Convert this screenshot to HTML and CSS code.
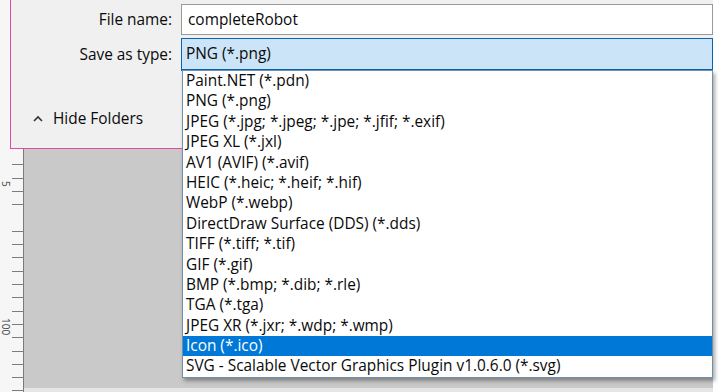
FILE: index.html
```html
<!DOCTYPE html>
<html lang="en">

<head>
    <meta charset="UTF-8">
    <title>Save As</title>
    <link rel="stylesheet" href="styles.css">
</head>

<body>
    <div class="screen">
        <!-- left ruler of the editor -->
        <div class="ruler">
            <span class="ruler-num num-5">5</span>
            <span class="ruler-num num-100">100</span>
        </div>
        <div class="canvas"></div>
        <div class="edge"></div>

        <!-- save dialog -->
        <div class="dialog">
            <div class="form-grid">
                <label class="field-label" for="fileName">File name:</label>
                <div class="text-box" id="fileName">completeRobot</div>

                <label class="field-label" for="fileType">Save as type:</label>
                <div class="combo" id="fileType">PNG (*.png)</div>
            </div>

            <div class="folders-toggle">
                <svg class="chevron" width="10" height="7" viewBox="0 0 10 7">
                    <polyline points="1,6 5,2 9,6" fill="none" stroke="#333" stroke-width="1.6" />
                </svg>
                <span>Hide Folders</span>
            </div>
        </div>

        <!-- opened type list -->
        <ul class="type-list">
            <li>Paint.NET (*.pdn)</li>
            <li>PNG (*.png)</li>
            <li>JPEG (*.jpg; *.jpeg; *.jpe; *.jfif; *.exif)</li>
            <li>JPEG XL (*.jxl)</li>
            <li>AV1 (AVIF) (*.avif)</li>
            <li>HEIC (*.heic; *.heif; *.hif)</li>
            <li>WebP (*.webp)</li>
            <li>DirectDraw Surface (DDS) (*.dds)</li>
            <li>TIFF (*.tiff; *.tif)</li>
            <li>GIF (*.gif)</li>
            <li>BMP (*.bmp; *.dib; *.rle)</li>
            <li>TGA (*.tga)</li>
            <li>JPEG XR (*.jxr; *.wdp; *.wmp)</li>
            <li class="selected">Icon (*.ico)</li>
            <li>SVG - Scalable Vector Graphics Plugin v1.0.6.0 (*.svg)</li>
        </ul>
    </div>
</body>

</html>
```

FILE: styles.css
```css
body {
    margin: 0;
    font-family: "Open Sans", "Noto Sans", sans-serif;
    font-size: 15.4px;
    color: #0a0a0a;
    background: #fff;
}

.screen {
    position: relative;
    display: flex;
    width: 718px;
    height: 392px;
    overflow: hidden;
}

.ruler {
    position: relative;
    width: 23px;
    flex: none;
    border-right: 1px solid #7c7c7c;
    background-color: #f6f6f6;
    background-image: repeating-linear-gradient(to bottom, transparent 0, transparent 12.3px, #7c7c7c 12.3px, #7c7c7c 13.3px);
    background-size: 11px 100%;
    background-position: right 0 top 152px;
    background-repeat: no-repeat;
}

.ruler-num {
    position: absolute;
    font-size: 10px;
    color: #444;
    transform: rotate(90deg);
    transform-origin: left top;
}

.num-5 {
    top: 181px;
    left: 13px;
}

.num-100 {
    top: 318px;
    left: 13px;
}

.canvas {
    flex: 1;
    background: #c9c9c9;
    border-bottom: 4px solid #e6e6e6;
}

.edge {
    width: 5px;
    flex: none;
    background: #fff;
}

.dialog {
    position: absolute;
    left: 10px;
    top: 0;
    width: 702px;
    height: 144px;
    background: #f0f0f0;
    border-left: 1px solid #e34aa3;
    border-bottom: 1px solid #e34aa3;
    padding-top: 4px;
}

.form-grid {
    display: grid;
    grid-template-columns: 161px 1fr;
    column-gap: 9px;
    row-gap: 3px;
    align-items: center;
}

.field-label {
    text-align: right;
}

.text-box {
    height: 29px;
    line-height: 29px;
    padding-left: 6px;
    background: #fff;
    border: 1px solid #9a9a9a;
}

.combo {
    height: 30px;
    line-height: 30px;
    padding-left: 4px;
    background: #cce4f7;
    border: 1px solid #0a64b0;
    border-bottom-width: 2px;
}

.folders-toggle {
    display: flex;
    align-items: center;
    gap: 10px;
    margin: 37px 0 0 22px;
}

.type-list {
    position: absolute;
    left: 182px;
    top: 70px;
    width: 529px;
    margin: 0;
    padding: 0;
    list-style: none;
    background: #fff;
    border: 1px solid #6f8fae;
    box-shadow: 2px 3px 4px rgba(0, 0, 0, 0.35);
}

.type-list li {
    height: 20.4px;
    line-height: 20.4px;
    padding-left: 3px;
    white-space: nowrap;
}

.type-list .selected {
    background: #0078d7;
    color: #fff;
}
```
